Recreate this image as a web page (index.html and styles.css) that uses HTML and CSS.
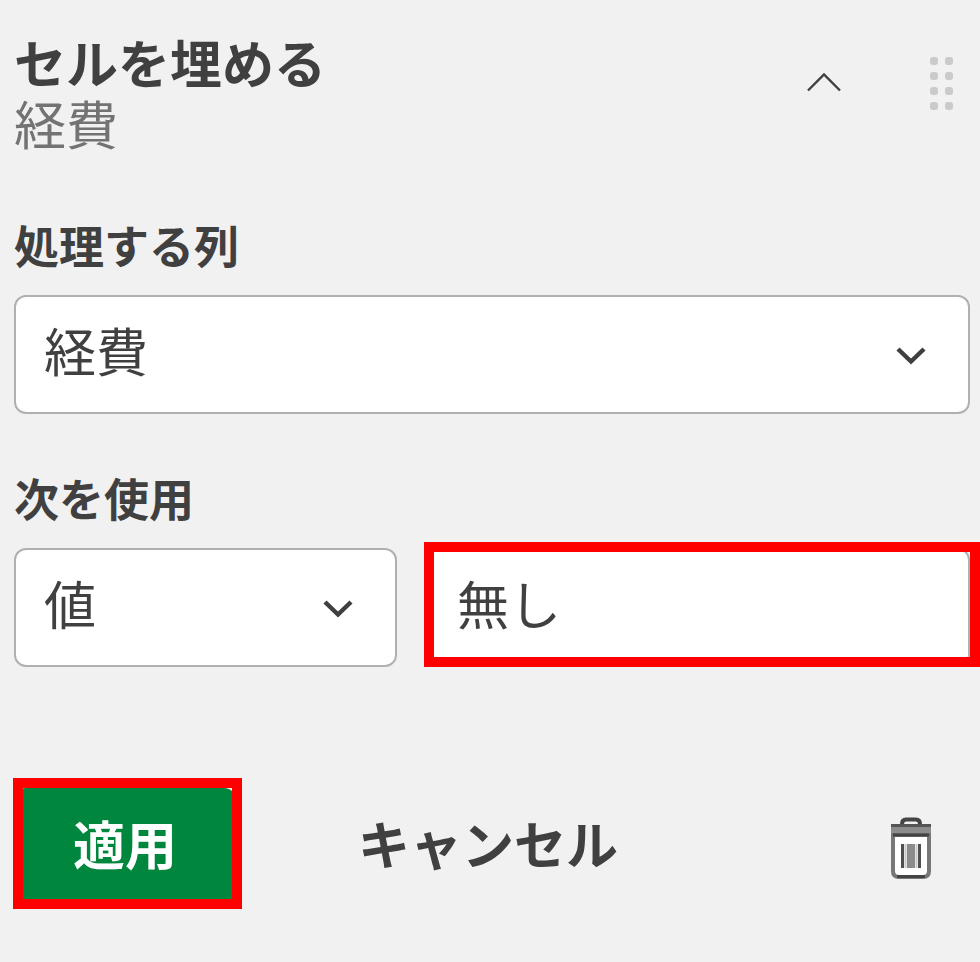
FILE: index.html
```html
<!DOCTYPE html>
<html lang="ja">
<head>
  <meta charset="UTF-8">
  <meta name="viewport" content="width=device-width, initial-scale=1.0">
  <title>セルを埋める</title>
  <link rel="stylesheet" href="styles.css">
</head>
<body>
  <form class="panel">
    <header class="panel-header">
      <div class="titles">
        <h1>セルを埋める</h1>
        <p>経費</p>
      </div>
      <button type="button" class="icon-button collapse" aria-label="折りたたむ">
        <svg width="36" height="20" viewBox="0 0 36 20" fill="none" stroke="#404040" stroke-width="2.4">
          <path d="M2 18.500L18 2.500L34 18.500"/>
        </svg>
      </button>
      <button type="button" class="icon-button" aria-label="移動">
        <svg width="24" height="56" viewBox="0 0 24 56" fill="#cacaca">
          <rect x="0" y="1" width="8" height="8" rx="3"/>
          <rect x="15" y="1" width="8" height="8" rx="3"/>
          <rect x="0" y="16" width="8" height="8" rx="3"/>
          <rect x="15" y="16" width="8" height="8" rx="3"/>
          <rect x="0" y="31" width="8" height="8" rx="3"/>
          <rect x="15" y="31" width="8" height="8" rx="3"/>
          <rect x="0" y="46" width="8" height="8" rx="3"/>
          <rect x="15" y="46" width="8" height="8" rx="3"/>
        </svg>
      </button>
    </header>

    <div class="field">
      <label for="column">処理する列</label>
      <div class="select-box">
        <select id="column">
          <option>経費</option>
        </select>
        <svg class="chevron" width="32" height="20" viewBox="0 0 32 20" fill="none" stroke="#404040" stroke-width="4.5">
          <path d="M3 3L16 15.500L29 3"/>
        </svg>
      </div>
    </div>

    <div class="field">
      <label for="source">次を使用</label>
      <div class="value-row">
        <div class="select-box">
          <select id="source">
            <option>値</option>
          </select>
          <svg class="chevron" width="32" height="20" viewBox="0 0 32 20" fill="none" stroke="#404040" stroke-width="4.5">
            <path d="M3 3L16 15.500L29 3"/>
          </svg>
        </div>
        <div class="marked marked-input">
          <input type="text" id="value" value="無し" aria-label="値">
        </div>
      </div>
    </div>

    <footer class="actions">
      <div class="marked marked-apply">
        <button type="button" class="apply">適用</button>
      </div>
      <button type="button" class="cancel">キャンセル</button>
      <button type="button" class="icon-button delete" aria-label="削除">
        <svg width="42" height="62" viewBox="0 0 42 62">
          <path d="M12 9V7Q12 2.500 16 2.500H26Q30 2.500 30 7V9" fill="none" stroke="#444" stroke-width="4"/>
          <rect x="1" y="8" width="40" height="9" fill="#8c8c8c"/>
          <path d="M1 8.500H41" stroke="#555" stroke-width="3"/>
          <path d="M3 18H39V54Q39 60 33 60H9Q3 60 3 54Z" fill="#fff" stroke="#777" stroke-width="4"/>
          <path d="M3 18H39M7 59.500H35" stroke="#444" stroke-width="3"/>
          <rect x="17" y="27" width="8" height="24" fill="#8c8c8c"/>
          <path d="M12.500 27V51M29.500 27V51" stroke="#505050" stroke-width="3"/>
          <path d="M15.500 27V51M26.500 27V51" stroke="#c8c8c8" stroke-width="2"/>
        </svg>
      </button>
    </footer>
  </form>
</body>
</html>
```
FILE: styles.css
```css
* {
  box-sizing: border-box;
}
body {
  margin: 0;
  background-color: #f1f1f1;
  color: #404040;
  font-family: "Noto Sans CJK JP", sans-serif;
}
button, input, select {
  margin: 0;
  font-family: inherit;
  font-size: 52px;
  color: inherit;
}
button {
  padding: 0;
  border: none;
  background: none;
  cursor: pointer;
}
svg {
  display: block;
}
.panel {
  padding: 31px 10px 60px 14px;
}
.panel-header {
  display: flex;
  align-items: flex-start;
  margin-bottom: 68px;
  padding-right: 16px;
}
.titles {
  flex: 1;
}
h1, p {
  margin: 0;
  font-size: 52px;
}
h1 {
  font-weight: bold;
  line-height: 62px;
}
p {
  color: #737373;
  line-height: 60px;
}
.icon-button {
  flex: none;
  margin-top: 25px;
}
.collapse {
  margin: 41px 88px 0 0;
}
.field {
  margin-bottom: 60px;
}
label {
  display: block;
  margin-bottom: 26px;
  font-size: 45px;
  font-weight: bold;
  line-height: 48px;
}
.select-box {
  position: relative;
}
select, input {
  display: block;
  width: 100%;
  height: 119px;
  padding: 0 28px 10px;
  border: 2px solid #b0b0b0;
  border-radius: 12px;
  background-color: #fff;
  appearance: none;
}
.chevron {
  position: absolute;
  top: 51px;
  right: 43px;
  pointer-events: none;
}
.value-row {
  display: grid;
  grid-template-columns: 383fr 543fr;
  gap: 30px;
}

/* red frames round the value and the apply button */
.marked {
  position: relative;
}
.marked::after {
  content: "";
  position: absolute;
  border: 10px solid #f00;
  pointer-events: none;
}
.marked-input::after {
  inset: -6px -10px 0 -3px;
}
.marked-apply::after {
  inset: -10px -6px -7px -1px;
}
.actions {
  display: flex;
  align-items: center;
  margin-top: 121px;
  padding-right: 38px;
}
.apply {
  display: block;
  width: 222px;
  height: 114px;
  padding-bottom: 6px;
  border-radius: 12px;
  background-color: #00873d;
  color: #fff;
  font-weight: bold;
}
.cancel {
  margin-left: 122px;
  padding-bottom: 6px;
  font-weight: bold;
}
.delete {
  margin: 6px 0 0 auto;
}
```
